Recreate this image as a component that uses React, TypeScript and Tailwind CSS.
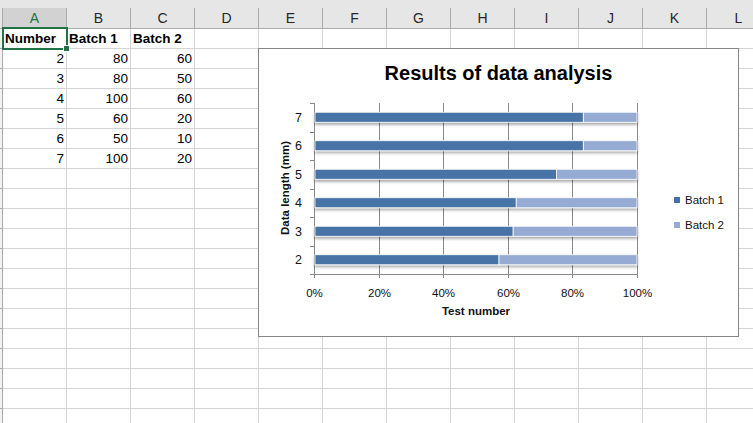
import { ReactNode } from "react";

const COLS = ["A", "B", "C", "D", "E", "F", "G", "H", "I", "J", "K", "L"];

const DATA = [
  { n: 2, b1: 80, b2: 60 },
  { n: 3, b1: 80, b2: 50 },
  { n: 4, b1: 100, b2: 60 },
  { n: 5, b1: 60, b2: 20 },
  { n: 6, b1: 50, b2: 10 },
  { n: 7, b1: 100, b2: 20 },
];

const ROW_COUNT = 20;

function Cell({ children, right, bold }: { children?: ReactNode; right?: boolean; bold?: boolean }) {
  return (
    <div
      className={`w-[64px] h-[20px] shrink-0 border-r border-b border-[#d4d4d4] px-[2px] flex items-center text-[13.5px] leading-none text-black ${
        right ? "justify-end" : "justify-start"
      } ${bold ? "font-bold" : ""}`}
    >
      {children}
    </div>
  );
}

function Chart() {
  const x0 = 55;
  const x1 = 378;
  const top = 54;
  const bottom = 225;
  const band = (bottom - top) / 6;
  const w = x1 - x0;
  const cats = [...DATA].reverse();
  const grid = [0, 1, 2, 3, 4, 5].map((i) => Math.round(x0 + (w * i) / 5) + 0.5);

  return (
    <div className="absolute left-[258px] top-[48px] w-[481px] h-[289px] border border-[#868686] bg-white">
      <div className="flex justify-center pt-[12px] text-[20px] font-bold leading-[24px] text-black">
        Results of data analysis
      </div>
      <svg
        width="479"
        height="287"
        className="absolute left-0 top-0"
        style={{ fontFamily: '"Liberation Sans", Arial, sans-serif' }}
      >
        <defs>
          <filter id="sh" x="-5%" y="-50%" width="110%" height="250%">
            <feDropShadow dx="0" dy="2" stdDeviation="1.6" floodColor="#000" floodOpacity="0.35" />
          </filter>
        </defs>

        {grid.map((gx, i) => (
          <line key={i} x1={gx} x2={gx} y1={top} y2={bottom + 4} stroke="#898989" strokeWidth="1" />
        ))}
        <line x1={x0 + 0.5} x2={x0 + 0.5} y1={top} y2={bottom + 4} stroke="#898989" />
        <line x1={x0 - 4} x2={x1 + 1} y1={bottom + 0.5} y2={bottom + 0.5} stroke="#898989" />
        {[0, 1, 2, 3, 4, 5].map((i) => (
          <line
            key={i}
            x1={x0 - 4}
            x2={x0}
            y1={Math.round(top + band * i) + 0.5}
            y2={Math.round(top + band * i) + 0.5}
            stroke="#898989"
          />
        ))}

        {cats.map((d, i) => {
          const yc = top + band * i + band / 2;
          const p = d.b1 / (d.b1 + d.b2);
          const split = x0 + 1 + (w - 1) * p;
          return (
            <g key={d.n}>
              <g filter="url(#sh)">
                <rect x={x0 + 1} y={yc - 5} width={split - x0 - 1} height={10} fill="#4673a7" stroke="#fff" strokeWidth="0.8" />
                <rect x={split} y={yc - 5} width={x1 - split} height={10} fill="#95abd3" stroke="#fff" strokeWidth="0.8" />
              </g>
              <text x={39.5} y={yc + 4.5} fontSize="12.5" textAnchor="middle" fill="#111">
                {d.n}
              </text>
            </g>
          );
        })}

        {[0, 20, 40, 60, 80, 100].map((v, i) => (
          <text key={v} x={grid[i]} y={248} fontSize="11.5" textAnchor="middle" fill="#111">
            {v}%
          </text>
        ))}

        <text x={217} y={266} fontSize="11.5" fontWeight="bold" textAnchor="middle" fill="#111">
          Test number
        </text>
        <text
          x={0}
          y={0}
          fontSize="11.5"
          fontWeight="bold"
          textAnchor="middle"
          fill="#111"
          transform="translate(30 139) rotate(-90)"
        >
          Data length (mm)
        </text>

        <rect x={415} y={148} width={6} height={6} fill="#4673a7" />
        <text x={426} y={155} fontSize="11.5" fill="#111">
          Batch 1
        </text>
        <rect x={415} y={173} width={6} height={6} fill="#95abd3" />
        <text x={426} y={180} fontSize="11.5" fill="#111">
          Batch 2
        </text>
      </svg>
    </div>
  );
}

export default function App() {
  const rows: ReactNode[][] = [];
  rows.push([
    <Cell key="a" bold>Number</Cell>,
    <Cell key="b" bold>Batch 1</Cell>,
    <Cell key="c" bold>Batch 2</Cell>,
  ]);
  DATA.forEach((d) =>
    rows.push([
      <Cell key="a" right>{d.n}</Cell>,
      <Cell key="b" right>{d.b1}</Cell>,
      <Cell key="c" right>{d.b2}</Cell>,
    ])
  );
  while (rows.length < ROW_COUNT) rows.push([]);

  return (
    <div
      className="relative w-[753px] h-[423px] overflow-hidden bg-white"
      style={{ fontFamily: '"Liberation Sans", Arial, sans-serif' }}
    >
      <div className="flex h-[29px] bg-[#e6e6e6] border-b border-[#ababab]">
        <div className="w-[3px] shrink-0 border-r border-[#ababab] mt-[8px]" />
        {COLS.map((c) => (
          <div
            key={c}
            className={`w-[64px] shrink-0 mt-[8px] border-r border-[#ababab] flex items-center justify-center text-[14px] ${
              c === "A" ? "bg-[#d2d2d2] text-[#217346]" : "text-[#262626]"
            }`}
          >
            {c}
          </div>
        ))}
      </div>

      {rows.map((cells, r) => (
        <div key={r} className="flex">
          <div className="w-[3px] h-[20px] shrink-0 bg-[#f2f2f2] border-r border-b border-[#ababab]" />
          {cells}
          {COLS.slice(cells.length).map((c) => (
            <Cell key={c} />
          ))}
        </div>
      ))}

      <div className="absolute left-[2px] top-[27px] w-[66px] h-[23px] border-2 border-[#217346]" />
      <div className="absolute left-[63px] top-[45px] w-[7px] h-[7px] bg-[#217346] border border-white" />

      <Chart />
    </div>
  );
}
